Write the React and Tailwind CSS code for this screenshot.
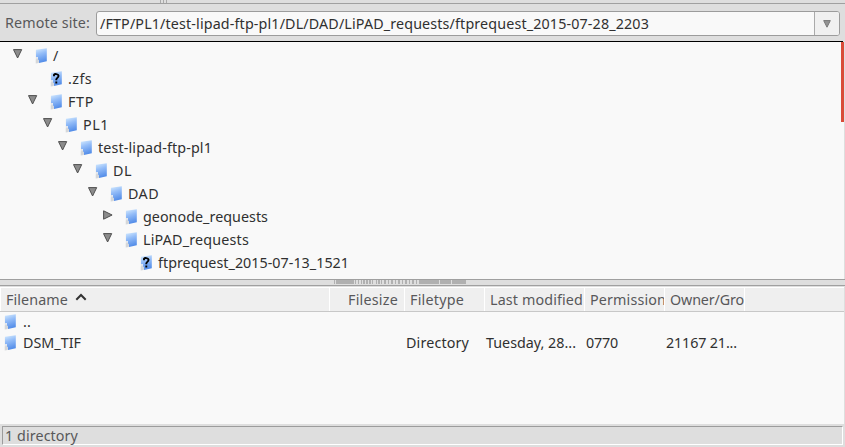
import React, { useLayoutEffect, useRef, useState } from "react";

// Text run whose tracking is adjusted so that it occupies `w` pixels.
function Fit({ w, children, className = "" }) {
  const ref = useRef(null);
  const [spacing, setSpacing] = useState(0);
  useLayoutEffect(() => {
    const natural = ref.current.getBoundingClientRect().width;
    setSpacing((w - natural) / children.length);
  }, [w, children]);
  return (
    <span
      ref={ref}
      className={`inline-block shrink-0 whitespace-pre ${className}`}
      style={{ letterSpacing: `${spacing}px` }}
    >
      {children}
    </span>
  );
}

function Folder({ unknown }) {
  return (
    <svg width="12" height="16" viewBox="0 0 12 16" className="-ml-px mr-px shrink-0">
      <defs>
        <linearGradient id="folder" x1="0" y1="0" x2="0.25" y2="1">
          <stop offset="0" stopColor="#d8edff" />
          <stop offset="0.45" stopColor="#94bdf8" />
          <stop offset="1" stopColor="#568fe9" />
        </linearGradient>
      </defs>
      <path d="M0.8 2.5 2 2V14.5L0.8 15.2Z" fill="#e3e5e7" />
      <path d="M1 1.8 11.8 0.2V13.2L4 15V13L2.8 11.3V9H1Z" fill="url(#folder)" />
      <path d="M0.8 11.5 2.6 10.5 4 13 3.7 15 0.8 15.6Z" fill="#d5d7da" />
      {unknown && (
        <path
          d="M4 5.2V3.7C4.6 2.8 8.1 2.7 8.5 4.5C8.9 6.6 6.3 7 6.3 8.6V9.3M6.3 10.6V12.4"
          fill="none"
          stroke="#000"
          strokeWidth="1.9"
        />
      )}
    </svg>
  );
}

function Expander({ open }) {
  return (
    <svg width="10" height="10" viewBox="0 0 10 10" className="shrink-0">
      <path
        d={open ? "M0.5 0.6H8.7L4.6 9Z" : "M0.6 0.8V9.2L9.1 5Z"}
        fill="#8c8c8c"
        stroke="#505050"
        strokeWidth="1"
      />
    </svg>
  );
}

const tree = [
  { pad: "pl-[13px]", open: true, label: "/", w: 7 },
  { pad: "pl-[28px]", unknown: true, label: ".zfs", w: 24 },
  { pad: "pl-[28px]", open: true, label: "FTP", w: 26 },
  { pad: "pl-[43px]", open: true, label: "PL1", w: 26 },
  { pad: "pl-[58px]", open: true, label: "test-lipad-ftp-pl1", w: 114 },
  { pad: "pl-[73px]", open: true, label: "DL", w: 19 },
  { pad: "pl-[88px]", open: true, label: "DAD", w: 31 },
  { pad: "pl-[103px]", open: false, label: "geonode_requests", w: 125 },
  { pad: "pl-[103px]", open: true, label: "LiPAD_requests", w: 106 },
  { pad: "pl-[118px]", unknown: true, label: "ftprequest_2015-07-13_1521", w: 191 },
];

function TreeRow({ pad, open, unknown, label, w }) {
  return (
    <div className={`flex h-[23px] items-center ${pad}`}>
      <div className="mr-[13px] flex h-[13px] w-[10px] items-start">
        {!unknown && <Expander open={open} />}
      </div>
      <Folder unknown={unknown} />
      <Fit w={w} className="ml-[5px] pt-px">{label}</Fit>
    </div>
  );
}

const cell = "flex h-full shrink-0 items-center overflow-hidden border-r border-white";

export default function App() {
  return (
    <div className="flex h-[447px] w-[845px] flex-col overflow-hidden bg-[#dedede] font-['Noto_Sans','Open_Sans',sans-serif] text-[14.3px] leading-[20px] text-[#303030]">
      <div className="flex h-1 shrink-0 gap-[2px] border-b border-[#a0a0a0] pl-[160px]">
        <i className="w-px bg-[#aaa]" />
        <i className="w-px bg-[#aaa]" />
        <i className="w-px bg-[#aaa]" />
      </div>

      <div className="flex h-[37px] shrink-0 items-start pl-[5px] pt-[7px] text-[#58585a]">
        <Fit w={85} className="mt-[2px]">Remote site:</Fit>
        <div className="ml-[6px] flex h-[25px] w-[744px] rounded-[3px] border border-[#9c9c9c] bg-[#f9f9f9] text-[#303030]">
          <div className="flex w-[717px] items-center pl-[3px] pt-px">
            <Fit w={549}>/FTP/PL1/test-lipad-ftp-pl1/DL/DAD/LiPAD_requests/ftprequest_2015-07-28_2203</Fit>
          </div>
          <div className="flex flex-1 items-center justify-center rounded-r-[2px] border-l border-[#aaa] bg-[#f0f0f0]">
            <svg width="8" height="8" viewBox="0 0 8 8">
              <path d="M0.7 0.6H7.3L4 7.2Z" fill="#929292" stroke="#777" />
            </svg>
          </div>
        </div>
      </div>

      <div className="h-px w-[843px] shrink-0 bg-black" />
      <div className="flex h-[237px] w-[844px] shrink-0 bg-[#f9f9f9]">
        <div className="flex w-[841px] flex-col pt-[2px]">
          {tree.map((row) => (
            <TreeRow key={row.label} {...row} />
          ))}
        </div>
        <div className="h-[80px] w-[3px] bg-[#d94b38]" />
      </div>

      <div className="flex h-[7px] shrink-0 border-y border-[#a0a0a0] pl-[334px]">
        <svg width="132" height="5" viewBox="0 0 132 5" fill="#b0b0b0">
          <path d="M0 0h1v4H0zM2 0h18v4H2zM21 0h1v4h-1zM24 0h1v4h-1zM27 0h1v4h-1zM29 0h2v4h-2zM32 0h2v4h-2zM35 0h2v4h-2zM38 0h1v4h-1zM42 0h1v4h-1zM44 0h2v4h-2zM47 0h1v4h-1zM50 0h2v4h-2zM54 0h1v4h-1zM57 0h2v4h-2zM61 0h1v4h-1zM64 0h2v4h-2zM68 0h1v4h-1zM71 0h2v4h-2zM75 0h1v4h-1zM78 0h2v4h-2zM82 0h1v4h-1zM85 0h20v4H85zM106 0h11v4h-11zM118 0h14v4h-14z" />
        </svg>
      </div>

      <div className="mt-px flex h-[25px] w-[844px] shrink-0 items-center border-b border-t border-b-[#c8c8c8] border-t-white bg-[#efefef] text-[#58585a]">
        <div className={`${cell} w-[330px] border-l pl-[5px]`}>
          <Fit w={62}>Filename</Fit>
          <svg width="12" height="8" viewBox="0 0 12 8" className="mb-[5px] ml-[7px]">
            <path d="M1.3 6.7 6 2 10.7 6.7" fill="none" stroke="#333" strokeWidth="2" />
          </svg>
        </div>
        <div className={`${cell} w-[75px] pl-[18px]`}>
          <Fit w={50}>Filesize</Fit>
        </div>
        <div className={`${cell} w-[80px] pl-[5px]`}>
          <Fit w={54}>Filetype</Fit>
        </div>
        <div className={`${cell} w-[100px] pl-[5px]`}>
          <Fit w={93}>Last modified</Fit>
        </div>
        <div className={`${cell} w-[80px] pl-[5px]`}>
          <Fit w={76}>Permission</Fit>
        </div>
        <div className={`${cell} w-[80px] pl-[5px]`}>
          <Fit w={74}>Owner/Gro</Fit>
        </div>
      </div>

      <div className="h-[112px] w-[844px] shrink-0 bg-[#f9f9f9]">
        <div className="flex h-[20px] items-center pl-[5px]">
          <Folder />
          <Fit w={8} className="ml-[6px]">..</Fit>
        </div>
        <div className="flex h-[21px] items-center">
          <div className="flex w-[406px] items-center pl-[5px]">
            <Folder />
            <Fit w={58} className="ml-[6px]">DSM_TIF</Fit>
          </div>
          <div className="w-[80px]"><Fit w={63}>Directory</Fit></div>
          <div className="w-[100px]"><Fit w={90}>Tuesday, 28...</Fit></div>
          <div className="w-[80px]"><Fit w={32}>0770</Fit></div>
          <div className="w-[80px]"><Fit w={71}>21167 21...</Fit></div>
        </div>
      </div>

      <div className="ml-[2px] mt-[2px] flex h-[19px] w-[841px] shrink-0 items-center border border-b-white border-l-[#9c9c9c] border-r-white border-t-[#9c9c9c] pl-[2px] text-[#58585a]">
        <Fit w={73}>1 directory</Fit>
      </div>
    </div>
  );
}
